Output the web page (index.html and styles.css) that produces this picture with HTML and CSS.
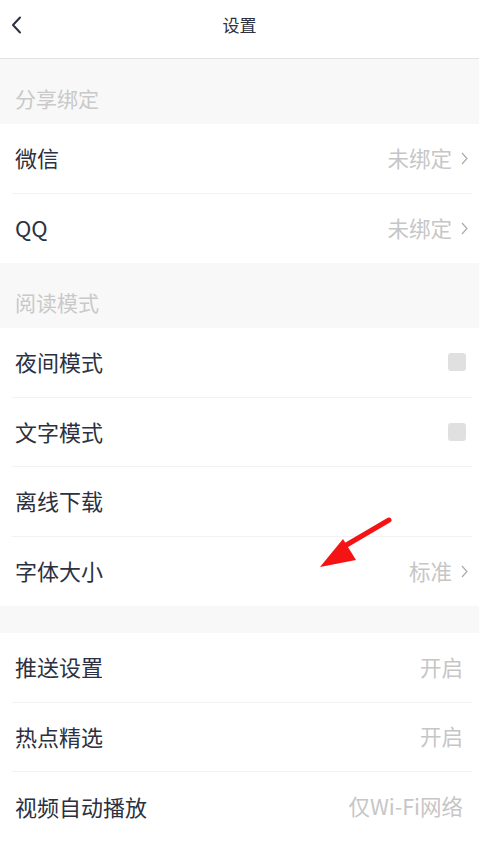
FILE: index.html
```html
<!DOCTYPE html>
<html lang="zh">
<head>
<meta charset="utf-8">
<title>设置</title>
<link rel="stylesheet" href="styles.css">
</head>
<body>
<div class="page">
  <header class="topbar">
    <svg class="back" width="12" height="18" viewBox="0 0 12 18"><path d="M9 1.5 L2 9 L9 16.5" fill="none" stroke="#2c3040" stroke-width="2" stroke-linecap="round" stroke-linejoin="round"/></svg>
    <div class="title">设置</div>
  </header>

  <div class="section-title">分享绑定</div>
  <div class="group">
    <div class="row"><span class="label">微信</span><span class="value">未绑定<svg class="chev" width="7" height="13" viewBox="0 0 7 13"><path d="M1 1 L6 6.5 L1 12" fill="none" stroke="#aaa" stroke-width="1.2"/></svg></span></div>
    <div class="row"><span class="label">QQ</span><span class="value">未绑定<svg class="chev" width="7" height="13" viewBox="0 0 7 13"><path d="M1 1 L6 6.5 L1 12" fill="none" stroke="#aaa" stroke-width="1.2"/></svg></span></div>
  </div>

  <div class="section-title">阅读模式</div>
  <div class="group">
    <div class="row"><span class="label">夜间模式</span><span class="check"></span></div>
    <div class="row"><span class="label">文字模式</span><span class="check"></span></div>
    <div class="row"><span class="label">离线下载</span></div>
    <div class="row"><span class="label">字体大小</span><span class="value">标准<svg class="chev" width="7" height="13" viewBox="0 0 7 13"><path d="M1 1 L6 6.5 L1 12" fill="none" stroke="#aaa" stroke-width="1.2"/></svg></span></div>
  </div>

  <div class="gap"></div>
  <div class="group">
    <div class="row"><span class="label">推送设置</span><span class="value plain">开启</span></div>
    <div class="row"><span class="label">热点精选</span><span class="value plain">开启</span></div>
    <div class="row"><span class="label">视频自动播放</span><span class="value plain">仅Wi-Fi网络</span></div>
  </div>

  <svg class="arrow" width="100" height="70" viewBox="0 0 100 70"><line x1="78" y1="10" x2="32" y2="37" stroke="#f41414" stroke-width="5" stroke-linecap="round"/><polygon points="9,57 32,29 45,50" fill="#f41414"/></svg>
</div>
</body>
</html>
```

FILE: styles.css
```css
html, body {
  margin: 0;
  padding: 0;
  background: #fff;
}
body {
  font-family: "Noto Sans CJK SC", "Noto Sans", sans-serif;
  color: #2c3040;
}
.page {
  position: relative;
  width: 479px;
  height: 841px;
  overflow: hidden;
  background: #fff;
}
.topbar {
  position: relative;
  height: 58px;
  border-bottom: 1px solid #e2e2e2;
  display: flex;
  justify-content: center;
}
.back {
  position: absolute;
  left: 11px;
  top: 16px;
}
.title {
  font-size: 17px;
  line-height: 20px;
  margin-top: 15px;
  color: #2c3040;
}
.section-title {
  height: 65px;
  background: #f8f8f8;
  color: #c9c9c9;
  font-size: 21px;
  padding-left: 15px;
  display: flex;
  align-items: center;
  padding-top: 13px;
  box-sizing: border-box;
}
.gap {
  height: 27px;
  background: #f8f8f8;
}
.group {
  background: #fff;
}
.row {
  height: 69.5px;
  margin: 0 7px 0 12px;
  padding: 0 4px 0 3px;
  display: flex;
  align-items: center;
  justify-content: space-between;
  border-bottom: 1px solid #f2f2f2;
  box-sizing: border-box;
}
.group .row:last-child {
  border-bottom: none;
}
.label {
  font-size: 22px;
  color: #2c3040;
  margin-top: -2px;
}
.value {
  font-size: 21.5px;
  color: #c6c6c6;
  display: flex;
  align-items: center;
  margin-top: -2px;
}
.value.plain {
  margin-right: 5px;
}
.chev {
  margin-left: 9px;
  margin-top: 2px;
}
.check {
  width: 18px;
  height: 18px;
  border-radius: 3px;
  background: #e0e0e0;
  margin-right: 2px;
}
.arrow {
  position: absolute;
  left: 311px;
  top: 510px;
}
```
